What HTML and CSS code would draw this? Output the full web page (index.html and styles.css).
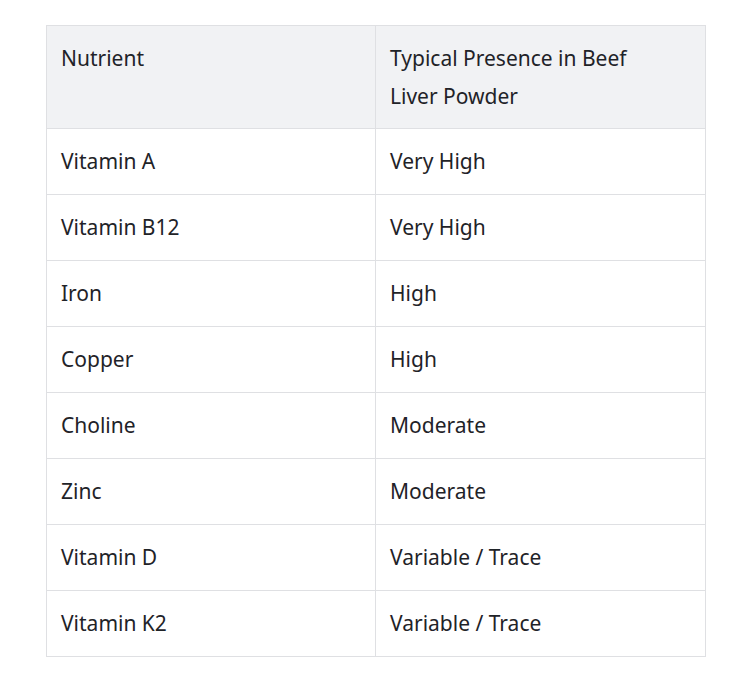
FILE: index.html
```html
<!DOCTYPE html>
<html>
<head>
<meta charset="utf-8">
<link rel="stylesheet" href="styles.css">
</head>
<body>
<div class="wrap">
<table class="nutrients">
  <colgroup>
    <col class="col-name">
    <col class="col-value">
  </colgroup>
  <thead>
    <tr><th>Nutrient</th><th>Typical Presence in Beef Liver Powder</th></tr>
  </thead>
  <tbody>
    <tr><td>Vitamin A</td><td>Very High</td></tr>
    <tr><td>Vitamin B12</td><td>Very High</td></tr>
    <tr><td>Iron</td><td>High</td></tr>
    <tr><td>Copper</td><td>High</td></tr>
    <tr><td>Choline</td><td>Moderate</td></tr>
    <tr><td>Zinc</td><td>Moderate</td></tr>
    <tr><td>Vitamin D</td><td>Variable / Trace</td></tr>
    <tr><td>Vitamin K2</td><td>Variable / Trace</td></tr>
  </tbody>
</table>
</div>
</body>
</html>
```
FILE: styles.css
```css
html, body {
  margin: 0;
  padding: 0;
  background: #ffffff;
}
.wrap {
  padding: 25px 0 0 46px;
}
.nutrients {
  border-collapse: collapse;
  width: 660px;
  table-layout: fixed;
  font-family: "Noto Sans", "Open Sans", sans-serif;
  font-size: 21px;
  line-height: 38px;
  color: #1f2328;
}
.col-name {
  width: 329px;
}
.nutrients th,
.nutrients td {
  border: 1px solid #dfe0e3;
  padding: 13px 14px 14px 14px;
  text-align: left;
  vertical-align: top;
  font-weight: 400;
}
.nutrients th {
  background: #f1f2f4;
  padding-bottom: 13px;
  padding-right: 44px;
}
```
